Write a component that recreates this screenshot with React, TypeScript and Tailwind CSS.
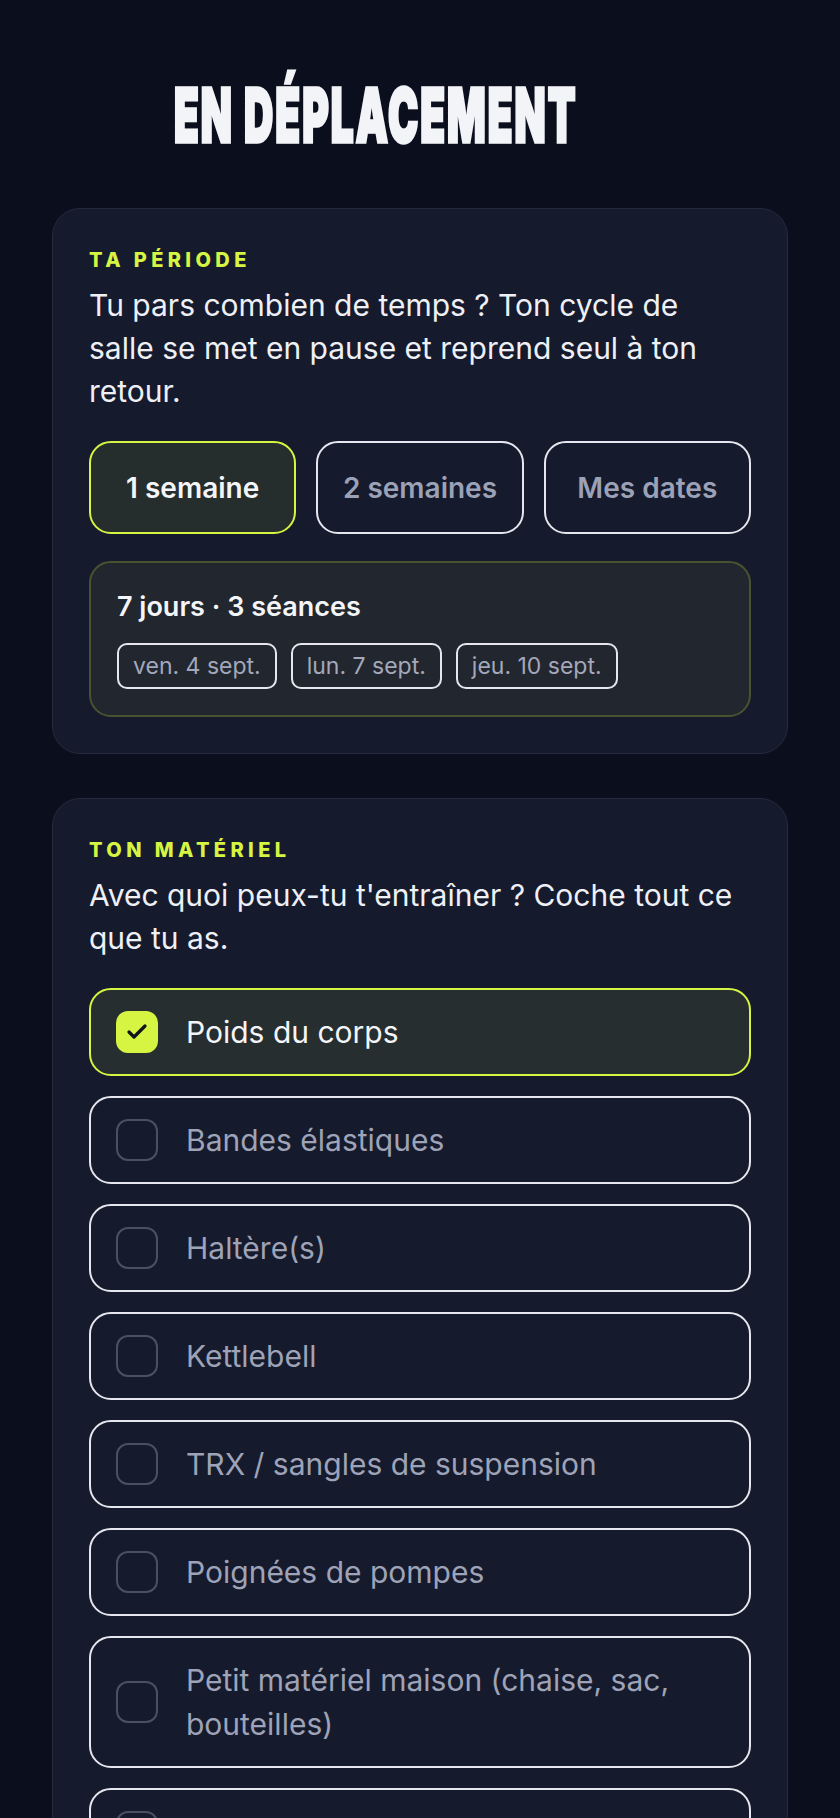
import { Check } from 'lucide-react'

const periods = ['1 semaine', '2 semaines', 'Mes dates']
const dates = ['ven. 4 sept.', 'lun. 7 sept.', 'jeu. 10 sept.']
const gear = [
  { label: 'Poids du corps', checked: true },
  { label: 'Bandes élastiques', checked: false },
  { label: 'Haltère(s)', checked: false },
  { label: 'Kettlebell', checked: false },
  { label: 'TRX / sangles de suspension', checked: false },
  { label: 'Poignées de pompes', checked: false },
  { label: 'Petit matériel maison (chaise, sac, bouteilles)', checked: false },
  { label: 'Sac à dos lesté (livres, eau)', checked: false },
]

function SectionLabel({ children }: { children: string }) {
  return (
    <p className="text-[20px] leading-[24px] font-extrabold tracking-[0.22em] text-[#d6f542]">
      {children}
    </p>
  )
}

export default function App() {
  return (
    <div
      className="min-h-screen bg-[#0b0e1d] px-[52px] pb-16"
      style={{ fontFamily: 'Inter, "Noto Sans", sans-serif' }}
    >
      <header className="pt-[77px] pl-[122px]">
        <h1 className="inline-block origin-top-left scale-x-[0.92] scale-y-[1.7] text-[44px] leading-[44px] font-black tracking-[0.05em] whitespace-nowrap text-[#f3f4f8] [-webkit-text-stroke:2px_#f3f4f8]">
          EN DÉPLACEMENT
        </h1>
      </header>

      <section className="mt-[87px] rounded-[28px] border border-[#252a3d] bg-[#161a2d] px-9 pt-[39px] pb-9">
        <SectionLabel>TA PÉRIODE</SectionLabel>
        <p className="mt-3 text-[30px] leading-[43px] text-[#eef0f5]">
          Tu pars combien de temps ? Ton cycle de salle se met en pause et reprend seul à ton retour.
        </p>

        <div className="mt-7 grid grid-cols-3 gap-5">
          {periods.map((p, i) => (
            <button
              key={p}
              className={
                i === 0
                  ? 'h-[93px] rounded-[22px] border-2 border-[#d6f542] bg-[#262d2d] text-[28px] font-semibold text-[#f4f5f8]'
                  : 'h-[93px] rounded-[22px] border-2 border-[#e6e7ee] text-[28px] font-semibold text-[#9ba1b6]'
              }
            >
              {p}
            </button>
          ))}
        </div>

        <div className="mt-[27px] rounded-[22px] border-2 border-[#4a5330] bg-[#22262f] px-[26px] pt-7 pb-[26px]">
          <p className="text-[27px] leading-[32px] font-semibold text-[#f4f5f8]">7 jours · 3 séances</p>
          <div className="mt-5 flex gap-[14px]">
            {dates.map((d) => (
              <span
                key={d}
                className="flex h-[46px] items-center rounded-[10px] border-2 border-[#e6e7ee] px-[14px] text-[23px] text-[#a3a8ba]"
              >
                {d}
              </span>
            ))}
          </div>
        </div>
      </section>

      <section className="mt-11 rounded-[28px] border border-[#252a3d] bg-[#161a2d] px-9 pt-[39px] pb-9">
        <SectionLabel>TON MATÉRIEL</SectionLabel>
        <p className="mt-3 text-[30px] leading-[43px] text-[#eef0f5]">
          Avec quoi peux-tu t'entraîner ? Coche tout ce que tu as.
        </p>

        <div className="mt-7 flex flex-col gap-5">
          {gear.map((g) => (
            <label
              key={g.label}
              className={
                g.checked
                  ? 'flex items-center gap-7 rounded-[22px] border-2 border-[#d6f542] bg-[#272e2f] py-5 pl-[25px] pr-6'
                  : 'flex items-center gap-7 rounded-[22px] border-2 border-[#e6e7ee] py-5 pl-[25px] pr-6'
              }
            >
              {g.checked ? (
                <span className="flex size-[42px] shrink-0 items-center justify-center rounded-[12px] bg-[#d6f542]">
                  <Check size={24} strokeWidth={3.2} color="#10131c" />
                </span>
              ) : (
                <span className="size-[42px] shrink-0 rounded-[12px] border-2 border-[#4a4f62]" />
              )}
              <span
                className={
                  g.checked
                    ? 'text-[30px] leading-[44px] text-[#f4f5f8]'
                    : 'text-[30px] leading-[44px] text-[#9ea3b7]'
                }
              >
                {g.label}
              </span>
            </label>
          ))}
        </div>
      </section>
    </div>
  )
}
